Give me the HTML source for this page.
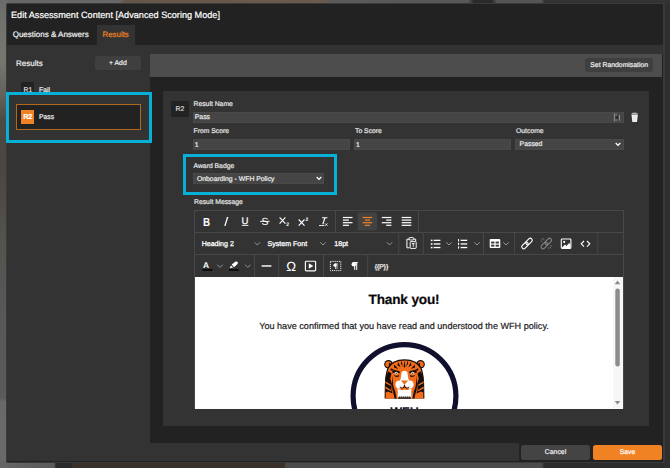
<!DOCTYPE html>
<html><head><meta charset="utf-8">
<style>
html,body{margin:0;padding:0;}
body{text-rendering:geometricPrecision;width:670px;height:468px;overflow:hidden;position:relative;background:#333;font-family:"Liberation Sans",sans-serif;color:#e4e4e4;}
.a{position:absolute;}
.t{position:absolute;white-space:nowrap;line-height:1;-webkit-text-stroke:0.2px currentColor;}
.lbl{font-size:6.82px;color:#e6e6e6;}
.inp{position:absolute;background:#454545;box-shadow:inset 0 0 0 0.6px rgba(255,255,255,0.05);box-sizing:border-box;height:10.8px;}
.inp span{-webkit-text-stroke:0.2px currentColor;position:absolute;left:1.8px;top:1.9px;font-size:6.85px;line-height:1;color:#eee;white-space:nowrap;}
.sep{position:absolute;width:1px;background:#4a4a4a;}
</style></head><body>
<!-- background strips -->
<div class="a" id="bgtop" style="left:0;top:0;width:670px;height:5px;background:linear-gradient(90deg,#666 0,#686868 118px,#65564a 125px,#6b5b4e 325px,#5a5a5a 332px,#585858 468px,#2a2a2a 474px,#2a2a2a 492px,#555 497px,#555 542px,#333 544px,#333 670px);"></div>
<div class="a" id="bgleft" style="left:0;top:0;width:7px;height:468px;background:linear-gradient(180deg,#6a6a6a 0,#73736e 30px,#777770 60px,#62625c 95px,#4c4a45 120px,#4a4641 170px,#54524d 234px,#575757 300px,#5a5a5a 398px,#696969 402px,#6a6a6a 468px);"></div>
<div class="a" id="bgbot" style="left:0;top:461px;width:670px;height:7px;background:linear-gradient(90deg,#666 0,#5a5a5a 54px,#2a2a2a 56px,#2a2a2a 71px,#3b2f2a 73px,#3b2f2a 284px,#4c4c4c 286px,#4c4c4c 542px,#2c2c2c 544px,#2c2c2c 670px);"></div>
<div class="a" id="bgright" style="left:664px;top:4px;width:6px;height:464px;background:#2f2f2f;"></div>

<!-- dialog -->
<div class="a" id="dlg" style="left:5.6px;top:3px;width:659.2px;height:459.6px;background:#222;border-style:solid;border-color:#3a3a3a;border-width:1.2px 2.2px 1.6px 1.2px;border-radius:2px;box-sizing:border-box;"></div>
<div id="cal0" class="t" style="left:11px;top:11px;font-size:9.14px;color:#fff;">Edit Assessment Content [Advanced Scoring Mode]</div>
<!-- tabs -->
<div class="a" style="left:97px;top:25px;width:38px;height:20px;background:#333;"></div>
<div id="cal1" class="t" style="left:12.7px;top:31px;font-size:8px;color:#f2f2f2;">Questions &amp; Answers</div>
<div id="cal2" class="t" style="left:102.5px;top:31px;font-size:7.9px;color:#f08224;">Results</div>

<!-- left panel -->
<div class="a" style="left:7px;top:44.5px;width:143px;height:416.5px;background:#333;"></div>
<div class="a" style="left:150px;top:44.5px;width:512.6px;height:9.5px;background:#333;"></div>
<!-- footer -->
<div class="a" style="left:7px;top:443px;width:512px;height:18px;background:#333;"></div>
<!-- top toolbar -->
<div class="a" style="left:150px;top:54px;width:512.3px;height:22.8px;background:#4d4d4d;"></div>
<!-- inner panel -->
<div class="a" style="left:163px;top:91px;width:486px;height:335px;background:#333;"></div>

<div id="cal3" class="t" style="left:16px;top:60px;font-size:8px;color:#f0f0f0;">Results</div>
<div class="a" style="left:95px;top:56px;width:46px;height:14px;background:#3f3f3f;border-radius:2.5px;"></div>
<div id="cal4" class="t" style="left:109px;top:61px;font-size:6.85px;color:#f0f0f0;">+ Add</div>

<div class="a" style="left:585px;top:58px;width:68px;height:14px;background:#3f3f3f;border-radius:2.5px;"></div>
<div id="cal5" class="t" style="left:590.3px;top:63px;font-size:6.85px;color:#f0f0f0;">Set Randomisation</div>

<!-- R1 -->
<div class="a" style="left:21px;top:82px;width:13px;height:14px;background:#222;"></div>
<div id="cal6" class="t" style="left:23.5px;top:88px;font-size:6.85px;color:#ddd;">R1</div>
<div id="cal7" class="t" style="left:39px;top:88px;font-size:6.85px;color:#eee;">Fail</div>

<!-- cyan box 1 -->
<div class="a" id="cy1" style="left:6px;top:92px;width:146px;height:51.3px;background:#333;border:3px solid #07b0d6;box-sizing:border-box;"></div>
<div class="a" style="left:16px;top:104px;width:125px;height:26px;background:#222;border:1px solid #b2681e;box-sizing:border-box;"></div>
<div class="a" style="left:20.9px;top:109.6px;width:13.5px;height:14.2px;background:#f08224;"></div>
<div id="cal8" class="t" style="left:23.2px;top:113px;font-size:7.3px;color:#fff;font-weight:bold;letter-spacing:-0.1px;">R2</div>
<div id="cal9" class="t" style="left:39px;top:115px;font-size:6.85px;color:#eee;">Pass</div>

<!-- form -->
<div class="a" style="left:171px;top:101px;width:18px;height:16px;background:#222;"></div>
<div id="cal10" class="t" style="left:175.5px;top:107px;font-size:6.85px;color:#ddd;">R2</div>

<div id="cal11" class="t lbl" style="left:193.5px;top:102px;">Result Name</div>
<div class="inp" style="left:193px;top:112px;width:431px;"><span id="cal17" style="top:3.00px;">Pass</span></div>
<div id="cal12" class="t lbl" style="left:193.5px;top:129px;">From Score</div>
<div class="inp" style="left:193px;top:138.8px;width:157px;"><span id="cal18" style="top:4.20px;">1</span></div>
<div id="cal13" class="t lbl" style="left:355px;top:129px;">To Score</div>
<div class="inp" style="left:354.3px;top:138.8px;width:156.7px;"><span id="cal19" style="top:4.20px;">1</span></div>
<div id="cal14" class="t lbl" style="left:516px;top:129px;">Outcome</div>
<div class="inp" style="left:515px;top:138.8px;width:108.8px;"><span id="cal20" style="top:3.20px;left:4.6px">Passed</span></div>
<svg class="a" style="left:615px;top:142px;" width="6" height="5" viewBox="0 0 6 5"><path d="M0.7 1 L3 3.4 L5.3 1" fill="none" stroke="#fff" stroke-width="1.3"/></svg>

<!-- input right icon + trash -->
<svg class="a" style="left:612px;top:111px;" width="30" height="13" viewBox="612 111 30 13">
<rect x="613.9" y="113.2" width="1" height="8.2" fill="#8d8d8d"/><rect x="615.6" y="113.6" width="1.2" height="2.6" fill="#7a7a7a"/><rect x="615.6" y="118.6" width="1.2" height="2.6" fill="#7a7a7a"/><rect x="615.8" y="115.8" width="2.6" height="3.2" fill="#2c2c2c"/><rect x="618.9" y="115" width="1" height="5.6" fill="#9a9a9a"/>
<path d="M631.2 114.4 Q631.2 112.6 634.6 112.4 Q638 112.6 638 114.4 Z" fill="#b4b4b4"/><path d="M631.5 114.8 L637.8 114.8 L637 122.1 L632.3 122.1 Z" fill="#f2f2f2"/><path d="M633.4 115.6 v5.6 M634.65 115.6 v5.6 M635.9 115.6 v5.6" stroke="#dcdcdc" stroke-width="0.5"/>
</svg>

<!-- cyan box 2 -->
<div class="a" style="left:183px;top:154px;width:154px;height:41px;border:3px solid #07b0d6;box-sizing:border-box;"></div>
<div id="cal15" class="t lbl" style="left:193.5px;top:164px;">Award Badge</div>
<div class="inp" style="left:193px;top:173.2px;width:131px;"><span id="cal21" style="top:3.80px;left:3.9px">Onboarding - WFH Policy</span></div>
<svg class="a" style="left:315.7px;top:176.3px;" width="6" height="5" viewBox="0 0 6 5"><path d="M0.7 1 L3 3.4 L5.3 1" fill="none" stroke="#fff" stroke-width="1.3"/></svg>

<div id="cal16" class="t lbl" style="left:194px;top:200px;">Result Message</div>

<!-- editor -->
<div class="a" id="ed" style="left:193.5px;top:209.5px;width:430.5px;height:199.5px;background:#333;border:1.3px solid #484848;border-bottom-color:#2f2f2f;box-sizing:border-box;"></div>
<div class="a" style="left:195px;top:232px;width:428px;height:1px;background:#484848;"></div>
<div class="a" style="left:195px;top:254px;width:428px;height:1px;background:#484848;"></div>
<div class="a" id="white" style="left:195px;top:277px;width:427.8px;height:131.5px;background:#fff;overflow:hidden;">
  <div id="cal24" class="t" style="left:0;width:418px;text-align:center;top:16px;font-size:13.6px;letter-spacing:-0.15px;font-weight:bold;color:#080808;">Thank you!</div>
  <div id="cal25" class="t" style="left:0;width:418px;text-align:center;top:45px;font-size:9.11px;color:#222;">You have confirmed that you have read and understood the WFH policy.</div>
  <svg class="a" style="left:0;top:0;" width="428" height="132" viewBox="195 277 428 132" font-family="Liberation Sans, sans-serif">
    <circle cx="404.5" cy="396" r="51.4" fill="none" stroke="#10102e" stroke-width="5.2"/>
    <!-- tiger -->
    <g id="tiger">
      <circle cx="388.5" cy="364.3" r="4.3" fill="#160c08"/><circle cx="420.5" cy="364.3" r="4.3" fill="#160c08"/>
      <circle cx="388.4" cy="364.3" r="3.1" fill="#f36c1c"/><circle cx="420.6" cy="364.3" r="3.1" fill="#f36c1c"/>
      <path d="M389.2 362.4 Q391.8 364 391 368 Q388.2 367.6 389.2 362.4 Z" fill="#160c08"/><path d="M 419.8 362.4 Q 417.2 364 418 368 Q 420.8 367.6 419.8 362.4 Z" fill="#160c08"/>
      <path d="M384.6 398.6 L384.8 386 Q385 374 387.6 367.4 Q392 359.4 404.5 359.2 Q417 359.4 421.4 367.4 Q424 374 424.2 386 L424.4 398.6 Z" fill="#160c08"/>
      <path d="M385.6 398.6 L385.8 386 Q386 375 388.6 368.4 Q393 360.6 404.5 360.4 Q416 360.6 420.4 368.4 Q423 375 423.2 386 L423.4 398.6 Z" fill="#f36c1c"/>
      <path d="M385.6 377 L388.4 371.2 L391.6 373.6 L390.2 378.4 L391.8 383.6 L391.4 389.6 L392.6 393.6 L388 391.4 L385.6 392.4 Z" fill="#160c08"/><path d="M 423.4 377 L 420.6 371.2 L 417.4 373.6 L 418.8 378.4 L 417.2 383.6 L 417.6 389.6 L 416.4 393.6 L 421 391.4 L 423.4 392.4 Z" fill="#160c08"/>
      <path d="M385.4 381.2 L390.6 384.4 L390.8 386 L385.4 383 Z M385.4 386.6 L391 390 L391.4 391.6 L385.4 388.4 Z" fill="#f36c1c"/><path d="M 423.6 381.2 L 418.4 384.4 L 418.2 386 L 423.6 383 Z M 423.6 386.6 L 418 390 L 417.6 391.6 L 423.6 388.4 Z" fill="#f36c1c"/>
      <path d="M392.8 375.6 Q392.2 386 395.2 391.6 L396.6 398.6 L394.6 398.6 L393.6 394 Q390.6 386 392.8 375.6 Z" fill="#160c08"/><path d="M 416.2 375.6 Q 416.8 386 413.8 391.6 L 412.4 398.6 L 414.4 398.6 L 415.4 394 Q 418.4 386 416.2 375.6 Z" fill="#160c08"/>
      <path d="M398 362 L400.6 367 L397.6 365.4 Z M394.2 364.4 L398.2 369 L394 367.6 Z M390.8 368.2 L396 370.8 L390.6 370.6 Z M401.6 360.8 L402.8 366.4 L400.8 363.6 Z" fill="#160c08"/><path d="M 411 362 L 408.4 367 L 411.4 365.4 Z M 414.8 364.4 L 410.8 369 L 415 367.6 Z M 418.2 368.2 L 413 370.8 L 418.4 370.6 Z M 407.4 360.8 L 406.2 366.4 L 408.2 363.6 Z" fill="#160c08"/>
      <path d="M404.5 360.2 L403.7 366.6 L404.5 367.8 L405.3 366.6 Z" fill="#160c08"/>
      <path d="M392 371.6 Q396 368.8 400 371.8 L399.4 373.4 Q396 371.4 392.8 373.2 Z" fill="#160c08"/><path d="M 417 371.6 Q 413 368.8 409 371.8 L 409.6 373.4 Q 413 371.4 416.2 373.2 Z" fill="#160c08"/>
      <path d="M393.4 374.4 Q396.4 376.8 399.2 375 L398.8 376.6 Q395.8 378 393.4 374.4 Z" fill="#160c08"/><path d="M 415.6 374.4 Q 412.6 376.8 409.8 375 L 410.2 376.6 Q 413.2 378 415.6 374.4 Z" fill="#160c08"/>
      <path d="M401.4 373.4 Q401.6 371 404.5 370.8 Q407.4 371 407.6 373.4 L408.6 380.4 L400.4 380.4 Z" fill="#fff"/>
      <circle cx="399.4" cy="384.6" r="4" fill="#fff"/><circle cx="409.6" cy="384.6" r="4" fill="#fff"/>
      <rect x="400" y="379.6" width="9" height="6" fill="#fff"/>
      <path d="M397.6 398.6 L397.8 390.6 L411.2 390.6 L411.4 398.6 Z" fill="#fff"/>
      <path d="M397.6 387.6 Q399 391 404.5 389.4 Q410 391 411.4 387.6 L411.4 391 L397.6 391 Z" fill="#fff"/>
      <path d="M400.8 380.6 L408.2 380.6 L404.5 384.8 Z" fill="#f36c1c"/>
      <path d="M404.5 384.8 L404.5 386.8 M399.8 387 Q402.2 389.6 404.5 386.9 Q406.8 389.6 409.2 387" fill="none" stroke="#160c08" stroke-width="0.9"/>
      <circle cx="396.3" cy="373.2" r="1.35" fill="#c9d8e2"/><circle cx="396.3" cy="373.2" r="0.55" fill="#160c08"/>
      <circle cx="412.7" cy="373.2" r="1.35" fill="#c9d8e2"/><circle cx="412.7" cy="373.2" r="0.55" fill="#160c08"/>
      <path d="M398 398.7 L398 396.4 L398.9 398 L399.9 395.8 L400.9 398 L401.9 395.8 L402.9 398 L403.9 395.8 L404.9 398 L405.9 395.8 L406.9 398 L407.9 395.8 L408.9 398 L409.9 395.8 L410.6 398 L411 396.4 L411 398.7 Z" fill="#160c08"/>
    </g>
    <text x="404.5" y="415.6" text-anchor="middle" font-size="12.6" font-weight="bold" fill="#10102e">WFH</text>
  </svg>
</div>


<!-- icons -->
<svg class="a" style="left:0;top:0;" width="670" height="468" viewBox="0 0 670 468" font-family="Liberation Sans, sans-serif">
<text x="203.1" y="225.5" font-size="11.6" font-weight="bold" fill="#fff" textLength="7.1" lengthAdjust="spacingAndGlyphs">B</text>
<path d="M227.6 217.3 L225 225.5" stroke="#fff" stroke-width="1.25" fill="none"/><path d="M226.5 217.5 h2.2 M223.9 225.3 h2.2" stroke="#fff" stroke-width="0.5" fill="none"/>
<text x="241.6" y="224.1" font-size="9.6" fill="#fff" stroke="#fff" stroke-width="0.25">U</text><rect x="241.8" y="224.9" width="6.6" height="0.9" fill="#fff"/>
<text x="261.4" y="225.2" font-size="10.4" fill="#fff">S</text><rect x="260" y="220.9" width="9.6" height="0.9" fill="#fff"/>
<path d="M279.6 217.4 L285.4 223.6 M285.4 217.4 L279.6 223.6" stroke="#fff" stroke-width="1.15" fill="none"/><text x="286.3" y="225.8" font-size="5" font-weight="bold" fill="#fff">2</text>
<path d="M298.7 219.5 L304.5 225.7 M304.5 219.5 L298.7 225.7" stroke="#fff" stroke-width="1.15" fill="none"/><text x="305.4" y="221.2" font-size="5" font-weight="bold" fill="#fff">2</text>
<path d="M322 217.7 H327.4 M325 217.7 L322.8 224.2" stroke="#fff" stroke-width="1.15" fill="none"/><rect x="319" y="225" width="5.4" height="0.85" fill="#fff"/><path d="M325.1 223.4 L327.5 225.8 M327.5 223.4 L325.1 225.8" stroke="#fff" stroke-width="0.8"/>
<rect x="335.0" y="211" width="1" height="21" fill="#484848"/>
<rect x="342.90" y="216.90" width="9.60" height="1.2" fill="#fff"/><rect x="342.90" y="219.50" width="6.05" height="1.2" fill="#fff"/><rect x="342.90" y="222.10" width="9.60" height="1.2" fill="#fff"/><rect x="342.90" y="224.70" width="6.05" height="1.2" fill="#fff"/>
<rect x="357.6" y="212.4" width="19.4" height="18" rx="1.5" fill="#424242"/>
<rect x="362.60" y="216.90" width="9.60" height="1.2" fill="#f08224"/><rect x="364.81" y="219.50" width="5.18" height="1.2" fill="#f08224"/><rect x="362.60" y="222.10" width="9.60" height="1.2" fill="#f08224"/><rect x="364.81" y="224.70" width="5.18" height="1.2" fill="#f08224"/>
<rect x="381.80" y="216.90" width="9.60" height="1.2" fill="#fff"/><rect x="386.22" y="219.50" width="5.18" height="1.2" fill="#fff"/><rect x="381.80" y="222.10" width="9.60" height="1.2" fill="#fff"/><rect x="386.22" y="224.70" width="5.18" height="1.2" fill="#fff"/>
<rect x="401.70" y="216.90" width="9.60" height="1.2" fill="#fff"/><rect x="401.70" y="219.50" width="9.60" height="1.2" fill="#fff"/><rect x="401.70" y="222.10" width="9.60" height="1.2" fill="#fff"/><rect x="401.70" y="224.70" width="9.60" height="1.2" fill="#fff"/>
<rect x="418.0" y="211" width="1" height="21" fill="#484848"/>
<text x="201.7" y="246" font-size="7.05" fill="#fff" stroke="#fff" stroke-width="0.28">Heading 2</text>
<path d="M254.60000000000002 242.29999999999998 L257.3 245.0 L260.0 242.29999999999998" fill="none" stroke="#a0a0a0" stroke-width="0.9"/>
<text x="267.6" y="246" font-size="7.05" fill="#fff" stroke="#fff" stroke-width="0.28">System Font</text>
<path d="M320.3 242.29999999999998 L323 245.0 L325.7 242.29999999999998" fill="none" stroke="#a0a0a0" stroke-width="0.9"/>
<text x="334.3" y="246" font-size="7.05" fill="#fff" stroke="#fff" stroke-width="0.28">18pt</text>
<path d="M386.8 242.29999999999998 L389.5 245.0 L392.2 242.29999999999998" fill="none" stroke="#a0a0a0" stroke-width="0.9"/>
<rect x="398.3" y="233" width="1" height="21" fill="#484848"/>
<path d="M409.6 239.2 h-2.7 v8.6 h2.7 M413.4 239.2 h2.3 v2.2" fill="none" stroke="#fff" stroke-width="1"/><rect x="409" y="237.6" width="4.6" height="2.4" rx="0.6" fill="none" stroke="#fff" stroke-width="0.9"/><rect x="410.2" y="241.6" width="6" height="6.8" rx="0.7" fill="none" stroke="#fff" stroke-width="0.95"/><path d="M411.8 243.6 h2.9 M413.25 243.6 v3.2" stroke="#fff" stroke-width="0.9"/>
<rect x="422.8" y="233" width="1" height="21" fill="#484848"/>
<rect x="430.8" y="239.6" width="1.7" height="1.6" fill="#fff"/><rect x="433.6" y="239.7" width="6.8" height="1.3" fill="#fff"/>
<rect x="430.8" y="243.2" width="1.7" height="1.6" fill="#fff"/><rect x="433.6" y="243.29999999999998" width="6.8" height="1.3" fill="#fff"/>
<rect x="430.8" y="246.79999999999998" width="1.7" height="1.6" fill="#fff"/><rect x="433.6" y="246.89999999999998" width="6.8" height="1.3" fill="#fff"/>
<path d="M446.3 242.29999999999998 L449 245.0 L451.7 242.29999999999998" fill="none" stroke="#a0a0a0" stroke-width="0.9"/>
<rect x="458" y="239.1" width="1.1" height="2.3" fill="#fff"/><rect x="460.6" y="239.7" width="6.6" height="1.3" fill="#fff"/>
<rect x="458" y="242.7" width="1.1" height="2.3" fill="#fff"/><rect x="460.6" y="243.29999999999998" width="6.6" height="1.3" fill="#fff"/>
<rect x="458" y="246.29999999999998" width="1.1" height="2.3" fill="#fff"/><rect x="460.6" y="246.89999999999998" width="6.6" height="1.3" fill="#fff"/>
<path d="M474.3 242.29999999999998 L477 245.0 L479.7 242.29999999999998" fill="none" stroke="#a0a0a0" stroke-width="0.9"/>
<rect x="483.0" y="233" width="1" height="21" fill="#484848"/>
<rect x="489.7" y="239" width="10.6" height="9" rx="1" fill="#fff"/><rect x="491.1" y="241.6" width="3.3" height="1.9" fill="#333"/><rect x="495.6" y="241.6" width="3.3" height="1.9" fill="#333"/><rect x="491.1" y="244.7" width="3.3" height="1.9" fill="#333"/><rect x="495.6" y="244.7" width="3.3" height="1.9" fill="#333"/>
<path d="M503.3 242.29999999999998 L506 245.0 L508.7 242.29999999999998" fill="none" stroke="#a0a0a0" stroke-width="0.9"/>
<rect x="514.1" y="233" width="1" height="21" fill="#484848"/>
<g transform="translate(527 243.5) rotate(-45)" fill="none" stroke="#fff" stroke-width="1.15"><rect x="-6.6" y="-2" width="7.6" height="4" rx="2"/><rect x="-1" y="-2" width="7.6" height="4" rx="2"/></g>
<g transform="translate(546.3 243.5) rotate(-45)" fill="none" stroke="#8a8a8a" stroke-width="1.0"><rect x="-6.6" y="-2" width="7.6" height="4" rx="2"/><rect x="-1" y="-2" width="7.6" height="4" rx="2"/></g>
<path d="M541.4 238.6 l1.3 1.6 M543.6 238 l0.3 1.7 M540.6 241 l1.7 0.4 M551.2 248.4 l-1.3 -1.6 M549 249 l-0.3 -1.7 M552 246 l-1.7 -0.4" stroke="#8a8a8a" stroke-width="0.7"/>
<rect x="561.3" y="239" width="9.6" height="9.4" rx="0.8" fill="none" stroke="#fff" stroke-width="1.1"/><circle cx="564.2" cy="241.9" r="1.05" fill="#fff"/><path d="M562 247.6 L565 244.6 L566.4 246 L569.2 243 L570.4 244.2 L570.4 247.9 L562 247.9 Z" fill="#fff"/>
<path d="M584 241 L581.2 243.8 L584 246.6 M587 241 L589.8 243.8 L587 246.6" fill="none" stroke="#fff" stroke-width="1.15"/>
<rect x="597.3" y="233" width="1" height="21" fill="#484848"/>
<text x="203.1" y="267.7" font-size="8.4" font-weight="bold" fill="#fff">A</text><rect x="202.6" y="269.2" width="9.8" height="1.5" fill="#000"/>
<path d="M217.4 264.7 L220.1 267.4 L222.79999999999998 264.7" fill="none" stroke="#a0a0a0" stroke-width="0.9"/>
<path d="M229.6 268.2 L231 265.4 L233.2 267.6 Z M231.7 264.6 L235.6 261.6 Q237.2 261 237.8 262.3 Q238.2 263.4 237 264.6 L234 267.2 Z" fill="#fff"/><rect x="229" y="269.2" width="9.8" height="1.5" fill="#000"/>
<path d="M245.10000000000002 264.7 L247.8 267.4 L250.5 264.7" fill="none" stroke="#a0a0a0" stroke-width="0.9"/>
<rect x="254.0" y="255" width="1" height="22" fill="#484848"/>
<rect x="261.6" y="265.1" width="9.8" height="1.7" fill="#dcdcdc"/>
<rect x="278.1" y="255" width="1" height="22" fill="#484848"/>
<text x="286.2" y="270.6" font-size="13.2" fill="#fff">Ω</text>
<rect x="305.4" y="261.2" width="10.2" height="9.6" rx="0.8" fill="none" stroke="#fff" stroke-width="1.15"/><path d="M308.8 263.2 L313.3 266 L308.8 268.8 Z" fill="#fff"/>
<rect x="323.0" y="255" width="1" height="22" fill="#484848"/>
<rect x="330.4" y="261.4" width="10.4" height="9.2" fill="none" stroke="#fff" stroke-width="1" stroke-dasharray="1.1 1"/><circle cx="335.01" cy="265.17" r="1.57" fill="#fff"/><rect x="335.01" y="263.60" width="2.75" height="0.70" fill="#fff"/><rect x="335.25" y="263.60" width="0.70" height="5.40" fill="#fff"/><rect x="336.64" y="263.60" width="0.70" height="5.40" fill="#fff"/><rect x="335.01" y="263.60" width="0.25" height="3.13" fill="#fff"/>
<circle cx="353.84" cy="264.36" r="2.26" fill="#fff"/><rect x="353.84" y="262.10" width="3.98" height="1.01" fill="#fff"/><rect x="354.20" y="262.10" width="1.01" height="7.80" fill="#fff"/><rect x="356.20" y="262.10" width="1.01" height="7.80" fill="#fff"/><rect x="353.84" y="262.10" width="0.36" height="4.52" fill="#fff"/>
<rect x="367.2" y="255" width="1" height="22" fill="#484848"/>
<text x="374.4" y="268.7" font-size="7" fill="#ececec" font-weight="bold" letter-spacing="-0.5" textLength="13.6" lengthAdjust="spacingAndGlyphs">{{P}}</text>
<rect x="613" y="277" width="9.8" height="131.5" fill="#f7f7f7"/><path d="M614.7 284.2 L617.5 280.6 L620.3 284.2 Z" fill="#8a8a8a"/><rect x="615.3" y="288.4" width="4.5" height="78" rx="2.2" fill="#8c8c8c"/><path d="M614.7 401 L617.5 404.6 L620.3 401 Z" fill="#8a8a8a"/>
</svg>
<!-- buttons -->
<div class="a" style="left:521px;top:445px;width:69px;height:14.5px;background:#444;border-radius:2.5px;"></div>
<div id="cal22" class="t" style="left:521px;width:69px;text-align:center;top:450px;font-size:6.85px;color:#eee;">Cancel</div>
<div class="a" style="left:593px;top:445px;width:69px;height:14.5px;background:#f08224;border-radius:2.5px;"></div>
<div id="cal23" class="t" style="left:593px;width:69px;text-align:center;top:450px;font-size:6.85px;color:#fff;">Save</div>
</body></html>
